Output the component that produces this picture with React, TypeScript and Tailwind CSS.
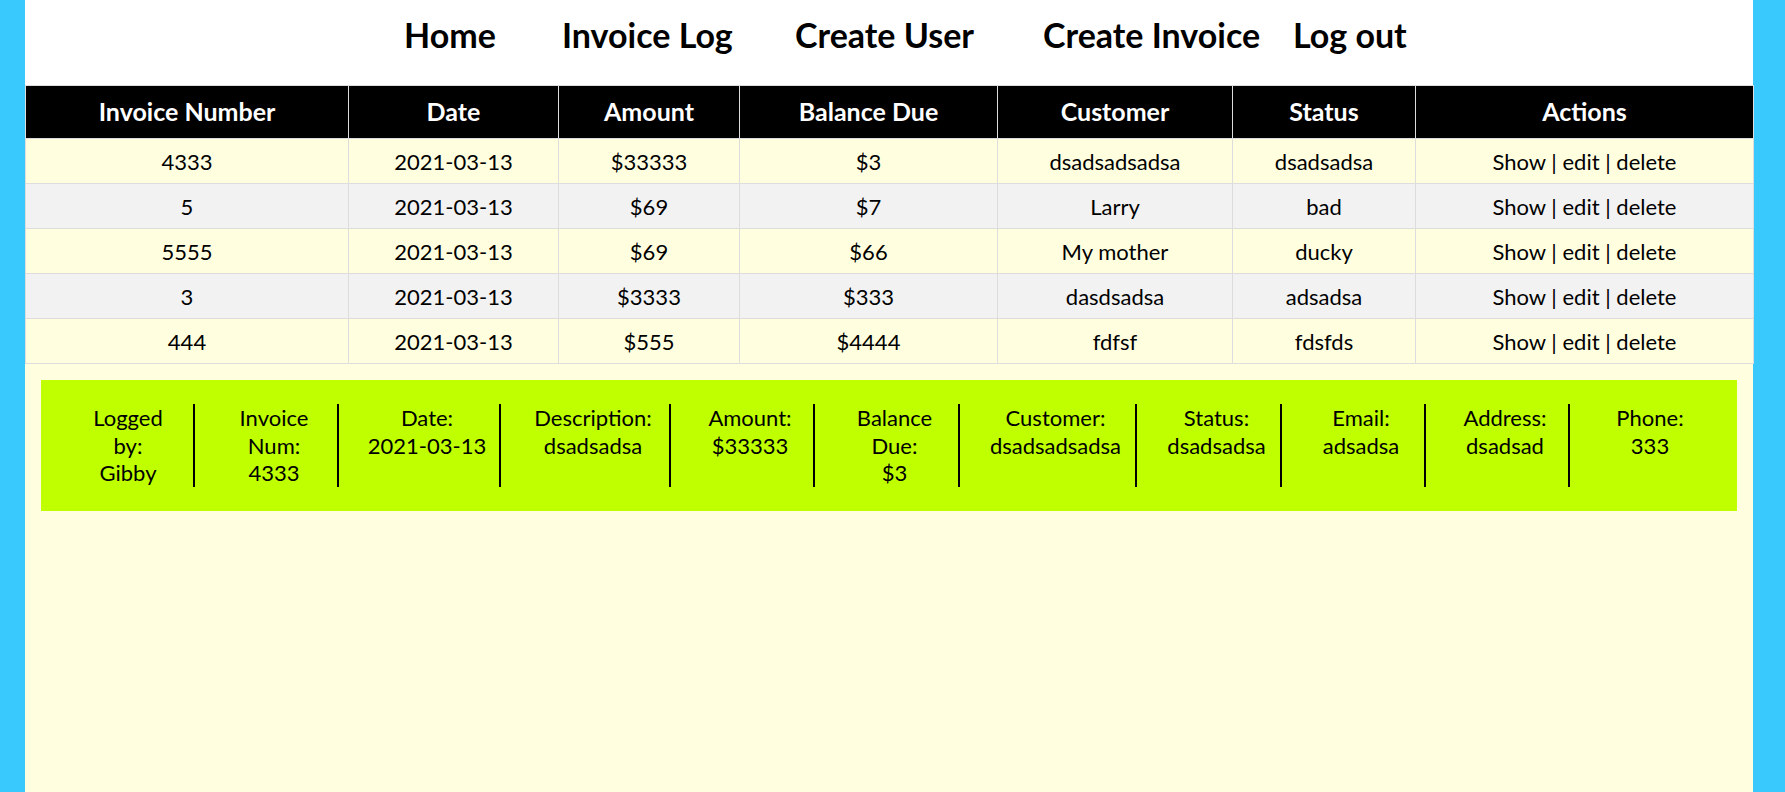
const navLinks = [
  { label: "Home", width: "w-[158px]" },
  { label: "Invoice Log", width: "w-[233px]" },
  { label: "Create User", width: "w-[248px]" },
  { label: "Create Invoice", width: "w-[250px]" },
  { label: "Log out", width: "" },
];

const columns = [
  { title: "Invoice Number", width: "w-[323px]" },
  { title: "Date", width: "w-[210px]" },
  { title: "Amount", width: "w-[181px]" },
  { title: "Balance Due", width: "w-[258px]" },
  { title: "Customer", width: "w-[235px]" },
  { title: "Status", width: "w-[183px]" },
  { title: "Actions", width: "w-[338px]" },
];

const invoices = [
  { num: "4333", date: "2021-03-13", amount: "$33333", due: "$3", customer: "dsadsadsadsa", status: "dsadsadsa" },
  { num: "5", date: "2021-03-13", amount: "$69", due: "$7", customer: "Larry", status: "bad" },
  { num: "5555", date: "2021-03-13", amount: "$69", due: "$66", customer: "My mother", status: "ducky" },
  { num: "3", date: "2021-03-13", amount: "$3333", due: "$333", customer: "dasdsadsa", status: "adsadsa" },
  { num: "444", date: "2021-03-13", amount: "$555", due: "$4444", customer: "fdfsf", status: "fdsfds" },
];

// detail strip for the selected invoice
const details = [
  { lines: ["Logged", "by:", "Gibby"], width: "w-[132px]" },
  { lines: ["Invoice", "Num:", "4333"], width: "w-[128px]" },
  { lines: ["Date:", "2021-03-13"], width: "w-[146px]" },
  { lines: ["Description:", "dsadsadsa"], width: "w-[154px]" },
  { lines: ["Amount:", "$33333"], width: "w-[128px]" },
  { lines: ["Balance", "Due:", "$3"], width: "w-[129px]" },
  { lines: ["Customer:", "dsadsadsadsa"], width: "w-[161px]" },
  { lines: ["Status:", "dsadsadsa"], width: "w-[129px]" },
  { lines: ["Email:", "adsadsa"], width: "w-[128px]" },
  { lines: ["Address:", "dsadsad"], width: "w-[128px]" },
  { lines: ["Phone:", "333"], width: "w-[128px]" },
];

export default function App() {
  return (
    <div className="min-h-screen bg-[#3ac9fc] font-['Lato',sans-serif] text-black">
      <div className="ml-[25px] w-[1728px] min-h-screen bg-[#ffffe0]">
        <nav className="flex h-[85px] items-center bg-white pl-[379px] pb-[16px]">
          {navLinks.map((link) => (
            <a key={link.label} className={`shrink-0 text-[34px] font-bold whitespace-nowrap ${link.width}`}>
              {link.label}
            </a>
          ))}
        </nav>

        <table className="w-[1728px] table-fixed border-collapse text-[22px]">
          <colgroup>
            {columns.map((c) => (
              <col key={c.title} className={c.width} />
            ))}
          </colgroup>
          <thead>
            <tr className="h-[53px] bg-black text-white">
              {columns.map((c) => (
                <th key={c.title} className="border border-[#dddddd] text-[25px] font-bold">
                  {c.title}
                </th>
              ))}
            </tr>
          </thead>
          <tbody>
            {invoices.map((inv, i) => (
              <tr
                key={inv.num}
                className={`h-[45px] text-center ${i % 2 === 1 ? "bg-[#f2f2f2]" : "bg-[#ffffe0]"}`}
              >
                <td className="border border-[#dddddd]">{inv.num}</td>
                <td className="border border-[#dddddd]">{inv.date}</td>
                <td className="border border-[#dddddd]">{inv.amount}</td>
                <td className="border border-[#dddddd]">{inv.due}</td>
                <td className="border border-[#dddddd]">{inv.customer}</td>
                <td className="border border-[#dddddd]">{inv.status}</td>
                <td className="border border-[#dddddd]">Show | edit | delete</td>
              </tr>
            ))}
          </tbody>
        </table>

        <div className="mx-4 mt-4 flex gap-4 bg-[#bfff00] py-6 pl-[22px] text-[22px] leading-[27.5px]">
          {details.map((d, i) => (
            <div
              key={d.lines[0]}
              className={`${d.width} shrink-0 text-center ${i < details.length - 1 ? "border-r-2 border-black" : ""}`}
            >
              {d.lines.map((line) => (
                <div key={line}>{line}</div>
              ))}
            </div>
          ))}
        </div>
      </div>
    </div>
  );
}
